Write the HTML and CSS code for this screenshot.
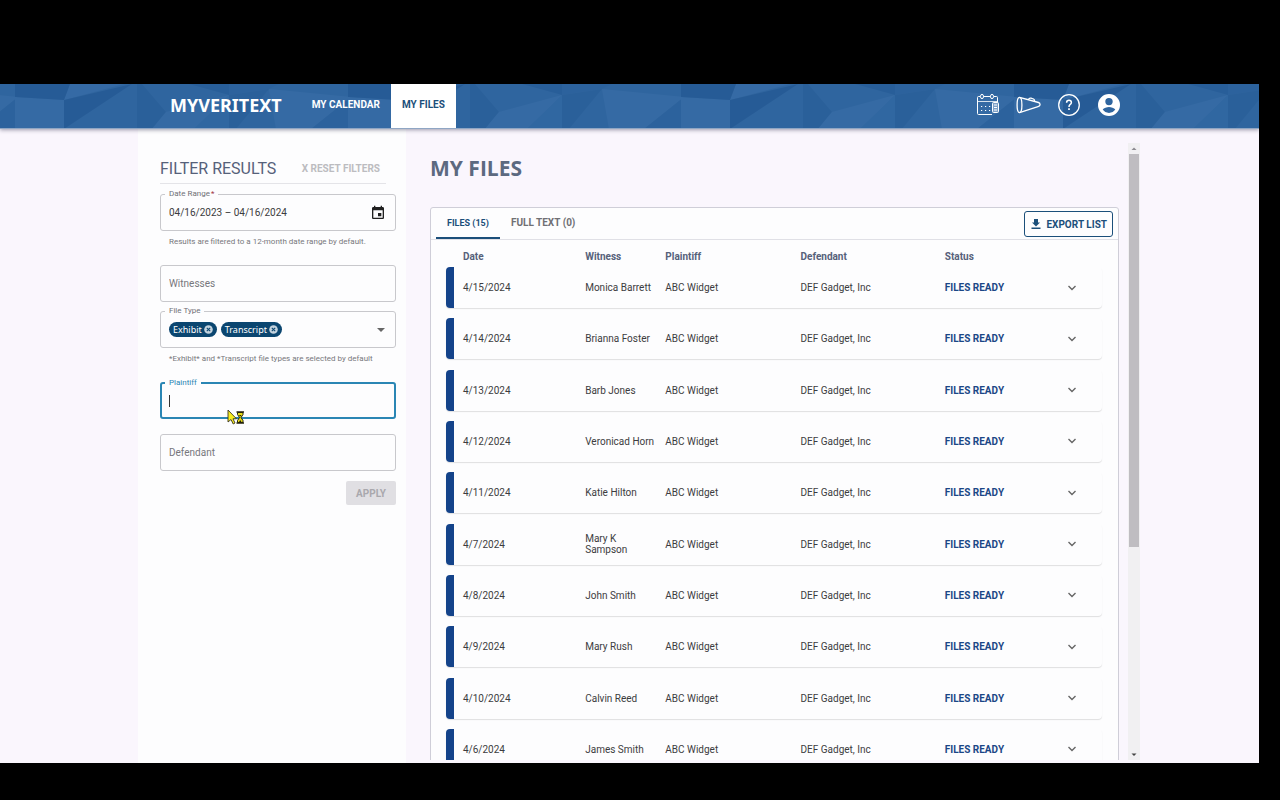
FILE: index.html
```
<!DOCTYPE html>
<html lang="en">
<head>
<meta charset="utf-8">
<title>MyVeritext - My Files</title>
<link rel="stylesheet" href="styles.css">
</head>
<body>
<div class="app">
  <header class="topbar">
    <svg class="facets" width="100%" height="100%" aria-hidden="true">
      <defs>
        <pattern id="facet" x="64" y="0" width="333" height="45" patternUnits="userSpaceOnUse">
          <rect width="333" height="45" fill="#2f659f"/>
          <path d="M6 0H60L0 16z" fill="#356aa5"/>
          <path d="M0 16L68 0L0 45z" fill="#265b96"/>
          <path d="M0 16L6 0H0z" fill="#265b96"/>
          <path d="M73 0H78L102 28L88 45H73z" fill="#2a609a"/>
          <path d="M102 28L165 11L130 45H88z" fill="#356aa4"/>
          <path d="M165 11V45H130z" fill="#3067a1"/>
          <path d="M125 0H165V11z" fill="#285e99"/>
          <path d="M165 0H215L205 5L165 11z" fill="#2c629d"/>
          <path d="M165 11L205 5L172 45H165z" fill="#2a609a"/>
          <path d="M205 5L287 13L247 45H212z" fill="#356aa4"/>
          <path d="M287 13L284 45H247z" fill="#2c629d"/>
          <path d="M284 13L333 16V45H284z" fill="#356aa4"/>
          <path d="M284 0H333V16L284 13z" fill="#265b96"/>
        </pattern>
      </defs>
      <rect width="100%" height="100%" fill="url(#facet)"/>
    </svg>
    <a class="brand" href="#">MYVERITEXT</a>
    <nav class="nav">
      <a class="nav-link" href="#">MY CALENDAR</a>
      <a class="nav-link nav-link-active" href="#" aria-current="page">MY FILES</a>
    </nav>
    <div class="tools">
      <button class="tool" aria-label="Calendar">
        <svg width="24" height="24" viewBox="0 0 24 24" fill="none" stroke="#fff" stroke-width="1">
          <path d="M5 3.500H3.500Q2.500 3.500 2.500 4.500V20.500Q2.500 21.500 3.500 21.500H17M8.500 3.500H15.500M19 3.500H21.500Q22.500 3.500 22.500 4.500V10"/>
          <path d="M2.500 8.500H22.500" stroke-opacity=".8"/>
          <ellipse cx="7" cy="3.500" rx="1.500" ry="2.200"/><ellipse cx="17" cy="3.500" rx="1.500" ry="2.200"/>
          <path d="M6 13.500H16M6 17.500H16" stroke-dasharray="1.200 2.800" stroke-width="1.200"/>
          <rect x="17.500" y="9.500" width="6" height="10" rx="1" fill="#7fa1c8"/><path d="M19 12H22M19 14.500H22M19 17H22"/>
        </svg>
      </button>
      <button class="tool" aria-label="Announcements">
        <svg width="26" height="24" viewBox="0 0 26 24" fill="none" stroke="#fff" stroke-width="1.300" stroke-linejoin="round">
          <ellipse cx="4.500" cy="12" rx="2.400" ry="7.600"/>
          <path d="M4.500 4.400L23.500 9.500Q25.300 10 25 12Q24.500 13.200 23 13.600L4.500 19.600M13.500 6.700Q14 4.800 16 5.200L18.500 6Q20 6.800 19.500 8.500"/>
        </svg>
      </button>
      <button class="tool" aria-label="Help">
        <svg width="24" height="24" viewBox="0 0 24 24" fill="none" stroke="#fff">
          <circle cx="12" cy="12" r="10.300" stroke-width="1.300"/>
          <path d="M9.600 9.700Q9.600 7.300 12 7.300T14.400 9.600Q14.400 10.800 13 11.700Q12 12.400 12 13.900" stroke-width="1.500"/><path d="M12 15.300V17.100" stroke-width="1.700"/>
        </svg>
      </button>
      <button class="tool" aria-label="Account">
        <svg width="24" height="24" viewBox="0 0 24 24" fill="#fff">
          <path d="M12 1a11 11 0 1 0 0 22a11 11 0 0 0 0-22zM12 4.900a3.700 3.700 0 1 1 0 7.400a3.700 3.700 0 0 1 0-7.400zM12 19.900c-2.700 0-5-1.300-6.300-3.300c1.100-1.900 4.200-2.700 6.300-2.700s5.200.8 6.300 2.700c-1.300 2-3.600 3.300-6.300 3.300z"/>
        </svg>
      </button>
    </div>
  </header>

  <div class="layout">
    <aside class="sidebar">
      <div class="filter-head">
        <h2 class="filter-title">FILTER RESULTS</h2>
        <button class="reset">X RESET FILTERS</button>
      </div>
      <form class="filters">
        <div class="field-group">
          <div class="field">
            <label class="float-label" for="range">Date Range<span class="required">*</span></label>
            <input class="control" id="range" type="text" value="04/16/2023 – 04/16/2024">
            <button class="icon-button" type="button" aria-label="Choose dates">
              <svg width="16" height="16" viewBox="0 0 24 24" fill="#202020"><path d="M17 12h-5v5h5v-5zM16 1v2H8V1H6v2H5c-1.110 0-1.990.9-1.990 2L3 19c0 1.100.890 2 2 2h14c1.100 0 2-.9 2-2V5c0-1.100-.9-2-2-2h-1V1h-2zm3 18H5V8h14v11z"/></svg>
            </button>
          </div>
          <p class="hint">Results are filtered to a 12-month date range by default.</p>
        </div>
        <div class="field">
          <input class="control" type="text" placeholder="Witnesses" aria-label="Witnesses">
        </div>
        <div class="field-group">
          <div class="field">
            <label class="float-label" for="type">File Type</label>
            <span class="chip">Exhibit<button class="chip-x" type="button" aria-label="Remove Exhibit"><svg width="9" height="9" viewBox="0 0 9 9"><circle cx="4.500" cy="4.500" r="4.300" fill="#c4d3de"/><path d="M2.800 2.800L6.200 6.200M6.200 2.800L2.800 6.200" stroke="#0b4670" stroke-width="1.100"/></svg></button></span>
            <span class="chip">Transcript<button class="chip-x" type="button" aria-label="Remove Transcript"><svg width="9" height="9" viewBox="0 0 9 9"><circle cx="4.500" cy="4.500" r="4.300" fill="#c4d3de"/><path d="M2.800 2.800L6.200 6.200M6.200 2.800L2.800 6.200" stroke="#0b4670" stroke-width="1.100"/></svg></button></span>
            <select class="control type-select" id="type"><option></option></select>
            <svg class="select-arrow" width="8" height="4" viewBox="0 0 8 4" aria-hidden="true"><path d="M0 0H8L4 4z" fill="#666"/></svg>
          </div>
          <p class="hint">*Exhibit* and *Transcript file types are selected by default</p>
        </div>
        <div class="field field-focus">
          <label class="float-label" for="plaintiff">Plaintiff</label>
          <input class="control" id="plaintiff" type="text">
          <span class="caret"></span>
          <svg class="pointer" width="18" height="16" viewBox="0 0 18 16" aria-hidden="true">
            <path d="M1 1V13L4 10.500L6.200 15L8 14L6 9.800H9.500z" fill="#f6ec1c" stroke="#3a3620" stroke-width=".9"/>
            <path d="M9.500 3H17M9.500 14H17" stroke="#22200a" stroke-width="1.600"/>
            <path d="M10.500 3.500H16V5.500L14 8.500L16 11.500V13.500H10.500V11.500L12.500 8.500L10.500 5.500z" fill="#e6dc16" stroke="#22200a"/>
            <path d="M12 6H14.500L13.200 7.500zM13.200 11L14.500 13H12z" fill="#22200a"/>
          </svg>
        </div>
        <div class="field">
          <input class="control" type="text" placeholder="Defendant" aria-label="Defendant">
        </div>
        <button class="apply" type="submit" disabled>APPLY</button>
      </form>
    </aside>

    <main class="content">
      <div class="viewport">
        <h1 class="page-title">MY FILES</h1>
        <section class="panel">
          <div class="tabs">
            <button class="tab tab-active">FILES (15)</button>
            <button class="tab">FULL TEXT (0)</button>
            <button class="export">
              <svg width="12" height="12" viewBox="0 0 24 24" fill="#1b4f7a"><path d="M20 9h-4V2H8v7H4l8 8zM3 19v3h18v-3z"/></svg>
              EXPORT LIST
            </button>
          </div>
          <table class="files">
            <thead>
              <tr class="row row-head"><th>Date</th><th>Witness</th><th>Plaintiff</th><th>Defendant</th><th>Status</th><td></td></tr>
            </thead>
            <tbody id="rows"></tbody>
          </table>
        </section>
      </div>
      <div class="scrollbar" aria-hidden="true">
        <svg class="scroll-arrow" viewBox="0 0 12 11"><path d="M3.500 7L6 4.500L8.500 7z" fill="#8c8a90"/></svg>
        <div class="scroll-track"><div class="scroll-thumb"></div></div>
        <svg class="scroll-arrow" viewBox="0 0 12 11"><path d="M3.500 4.500H8.500L6 7z" fill="#444"/></svg>
      </div>
    </main>
  </div>
</div>
<script src="app.js"></script>
</body>
</html>
```
FILE: app.js
```
const files = [
  ["4/15/2024", "Monica Barrett"],
  ["4/14/2024", "Brianna Foster"],
  ["4/13/2024", "Barb Jones"],
  ["4/12/2024", "Veronicad Horn"],
  ["4/11/2024", "Katie Hilton"],
  ["4/7/2024", "Mary K Sampson"],
  ["4/8/2024", "John Smith"],
  ["4/9/2024", "Mary Rush"],
  ["4/10/2024", "Calvin Reed"],
  ["4/6/2024", "James Smith"]
];
document.getElementById("rows").innerHTML = files.map(([date, witness]) => `
  <tr class="row row-file">
    <td>${date}</td><td>${witness}</td><td>ABC Widget</td><td>DEF Gadget, Inc</td>
    <td><a class="status" href="#">FILES READY</a></td>
    <td><button class="expand" aria-label="Expand ${date}"><svg width="8" height="6" viewBox="0 0 8 6" fill="none"><path d="M.5 1L4 4.500L7.500 1" stroke="#666" stroke-width="1.400"/></svg></button></td>
  </tr>`).join("");
```
FILE: styles.css
```
* { box-sizing: border-box; }
body {
  margin: 0;
  height: 100vh;
  padding: 84px 21px 37px 0;
  background: #000;
  font-family: Roboto, "Liberation Sans", sans-serif;
  font-size: 10px;
  color: #3c3c40;
}
h1, h2, p { margin: 0; }
button, input, select { font: inherit; color: inherit; margin: 0; }
button { padding: 0; border: 0; background: none; }
a { color: inherit; text-decoration: none; }

.app { height: 100%; display: flex; flex-direction: column; background: #faf6fd; overflow: hidden; }

.topbar {
  position: relative;
  z-index: 1;
  flex: none;
  height: 45px;
  display: flex;
  align-items: stretch;
  padding: 0 138px 0 170px;
  color: #fff;
  border-bottom: 1px solid #8fa6c4;
  box-shadow: 0 1px 4px rgba(40, 40, 70, .45);
}
.facets { position: absolute; inset: 0; z-index: -1; }
.brand { align-self: center; font: 700 18px/24px "Noto Sans", sans-serif; padding-bottom: 3px; }
.nav { display: flex; margin-left: 19px; }
.nav-link { display: flex; align-items: center; padding: 0 11px 3px; font-weight: 700; }
.nav-link-active { background: #fff; color: #1b4f7a; }
.tools { display: flex; align-items: center; gap: 16px; margin-left: auto; padding-bottom: 3px; }
.tool { display: flex; }

.layout { flex: 1; min-height: 0; display: flex; padding: 0 119px 0 138px; }

.sidebar { flex: none; width: 268px; padding: 25px 10px 0 22px; background: #fdfdfe; }
.filter-head {
  display: flex;
  align-items: center;
  justify-content: space-between;
  width: 226px;
  height: 30px;
  padding-right: 6px;
  border-bottom: 1px solid #e4e4e8;
}
.filter-title { font-size: 16px; font-weight: 400; color: #56617a; }
.reset { font-weight: 700; color: #bcbcc0; }
.filters { display: flex; flex-direction: column; padding-top: 10px; }
.field {
  position: relative;
  display: flex;
  align-items: center;
  gap: 4px;
  height: 37px;
  padding: 0 9px 0 8px;
  border: 1px solid #c8c8cc;
  border-radius: 3px;
}
.field-group { margin-bottom: 17px; }
.filters > .field { margin-bottom: 9px; }
.filters > .field-focus { margin-bottom: 15px; }
.control { flex: 1; min-width: 0; height: 24px; padding: 0; border: 0; outline: 0; background: none; }
.control::placeholder { color: #77777c; opacity: 1; }
.float-label {
  position: absolute;
  top: -7px;
  left: 4px;
  padding: 0 4px;
  background: #fdfdfe;
  font-size: 8px;
  line-height: 12px;
  color: #707076;
}
.required { margin-left: 1px; color: #a03040; }
.icon-button { display: flex; }
.hint { padding: 5px 9px 0; font-size: 8px; line-height: 12px; color: #77777c; }
.chip {
  display: flex;
  align-items: center;
  gap: 2px;
  height: 15px;
  padding: 0 4px;
  border-radius: 8px;
  background: #0b4670;
  color: #fff;
  font: 400 9px/15px "Noto Sans", sans-serif;
}
.chip-x { display: flex; }
.type-select { appearance: none; }
.select-arrow { margin-right: 1px; }
.field-focus { border: 2px solid #2a86b4; padding: 0 7px; }
.field-focus .float-label { left: 3px; color: #2a86b4; }
.caret { position: absolute; left: 7px; top: 11px; width: 1px; height: 12px; background: #333; }
.pointer { position: absolute; left: 65px; top: 25px; }
.apply {
  align-self: flex-end;
  width: 50px;
  height: 24px;
  margin-top: 1px;
  border-radius: 2px;
  background: #e0dfe3;
  color: #a9a8ad;
  font-weight: 700;
}

.content { flex: 1; min-width: 0; display: flex; gap: 9px; padding: 14px 0 3px 24px; }
.viewport { flex: 1; min-width: 0; overflow: hidden; }
.page-title { padding: 10px 0 24px; font: 700 21px/30px "Open Sans", sans-serif; color: #5c6980; }
.panel { border: 1px solid #cfced8; border-radius: 3px; background: #fdfdfe; }
.tabs { display: flex; height: 32px; padding: 0 5px; border-bottom: 1px solid #e0e0e6; }
.tab { padding: 0 11px; font-weight: 700; color: #707074; border-bottom: 2px solid transparent; }
.tab-active { font-size: 9px; color: #1b4f7a; border-bottom-color: #1b4f7a; }
.export {
  display: flex;
  align-items: center;
  gap: 4px;
  height: 26px;
  margin: 3px 0 0 auto;
  padding: 0 5px;
  border: 1px solid #1b4f7a;
  border-radius: 3px;
  color: #1b4f7a;
  font-weight: 700;
}
.files { display: block; padding: 0 16px 0 15px; }
.files thead { display: block; }
.files tbody { display: grid; align-content: space-between; height: 503px; }
.row { display: grid; grid-template-columns: 122fr 80fr 135fr 144fr 111fr 46fr; align-items: center; padding-left: 17px; }
.row td, .row th { padding: 0 8px 0 0; text-align: left; line-height: 11px; }
.row-head { height: 27px; padding-top: 6px; color: #56617a; }
.row-file {
  height: 41px;
  padding-left: 9px;
  border-left: 8px solid #14438a;
  border-radius: 4px;
  box-shadow: 0 1px 1px rgba(0, 0, 0, .12);
}
.status { font-weight: 700; color: #1b4786; }
.expand { display: flex; justify-content: center; width: 32px; padding: 8px 0; }

.scrollbar { flex: none; width: 12px; display: flex; flex-direction: column; background: #f1f0f2; }
.scroll-arrow { display: block; width: 12px; height: 11px; }
.scroll-track { flex: 1; padding: 0 1px; }
.scroll-thumb { height: 66%; background: #bfbdc1; }
```
